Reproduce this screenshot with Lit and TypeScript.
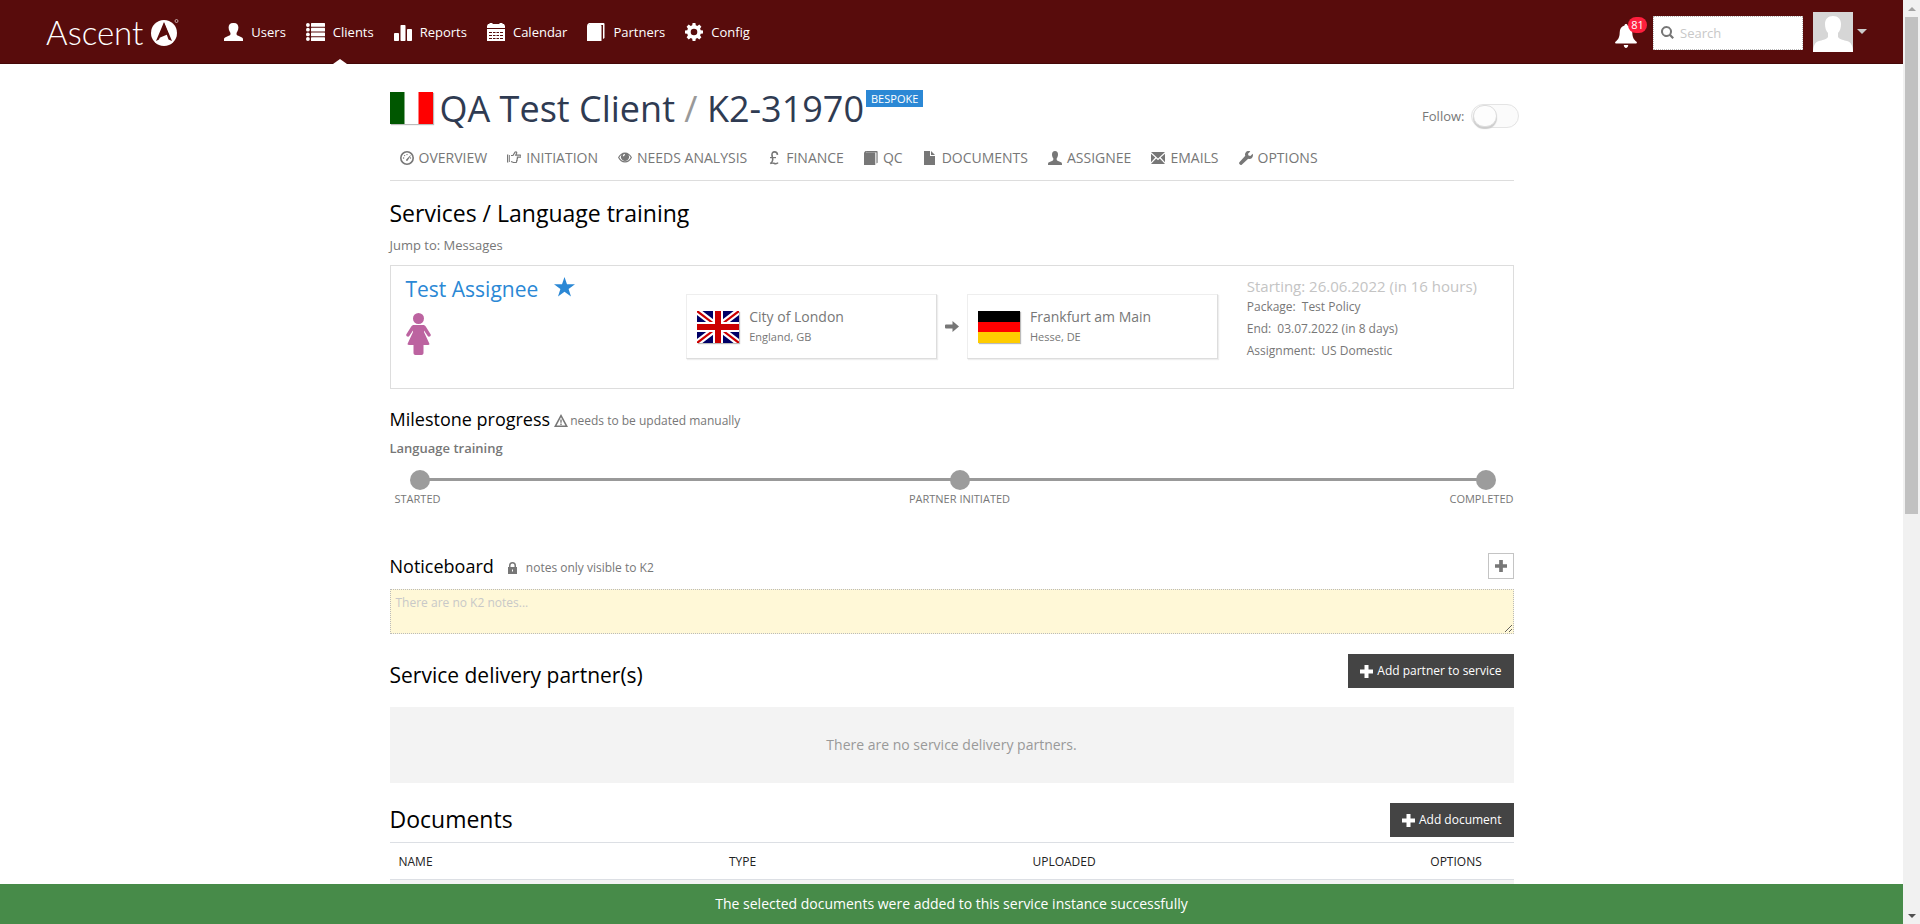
import { LitElement, html, css, svg, type TemplateResult } from "lit";
import { customElement } from "lit/decorators.js";

const icon = (w: number, h: number, box: string, body: TemplateResult) =>
  html`<svg class="icon" width=${w} height=${h} viewBox=${box} fill="currentColor" aria-hidden="true">${body}</svg>`;

const shapes = {
  user: svg`<path d="M9 0C6 0 4.600 1.800 4.600 4.600c0 1.600.4 3 1.200 4.200.5.800.700 1.200.700 2 0 1.100-.5 1.500-1.800 2L1.500 14.200C.4 14.700 0 15.200 0 16.500V18h19v-1.500c0-1.300-.4-1.800-1.500-2.300l-3.200-1.400c-1.300-.5-1.800-.9-1.800-2 0-.8.2-1.200.7-2 .8-1.200 1.200-2.600 1.200-4.200C14.400 1.800 13 0 10 0z"/>`,
  list: svg`<circle cx="1.900" cy="2" r="1.900"/><circle cx="1.900" cy="6.700" r="1.900"/><circle cx="1.900" cy="11.400" r="1.900"/><circle cx="1.900" cy="16" r="1.900"/><rect x="5" y="0" width="14" height="3.800" rx=".5"/><rect x="5" y="4.800" width="14" height="3.800" rx=".5"/><rect x="5" y="9.500" width="14" height="3.800" rx=".5"/><rect x="5" y="14.200" width="14" height="3.800" rx=".5"/>`,
  chart: svg`<rect x="0" y="10" width="5" height="8" rx=".8"/><rect x="6.500" y="2" width="5" height="16" rx=".8"/><rect x="13" y="6" width="5" height="12" rx=".8"/>`,
  calendar: svg`<path d="M0 5V3l1-2h1l1-1h2l1 1h6l1-1h2l1 1h1l1 2v2z"/><path fill-rule="evenodd" d="M0 6h18v12H0zM2 9v1h14V9zM2 12v1h14v-1zM2 15v1h14v-1z"/><path d="M5 8.500h1v8H5zM8.500 8.500h1v8h-1zM12 8.500h1v8h-1z"/>`,
  book: svg`<path d="M3 0h13.500q1 0 1 1v14l-1.500 1V2H3z"/><path d="M0 3q0-2 2-3h2L2.500 2H13.500q1 0 1 1v15H0z"/>`,
  gear: svg`<path fill-rule="evenodd" d="M7.600 0h2.800l.4 2.300 1.500.6 2-1.300 2.100 2.100-1.300 1.900.6 1.600 2.300.4v2.800l-2.300.4-.6 1.600 1.300 1.900-2.100 2.100-2-1.300-1.500.6-.4 2.300H7.600l-.4-2.300-1.500-.6-2 1.300-2.100-2.100 1.300-1.900-.6-1.600L0 10.400V7.600l2.300-.4.6-1.600-1.300-1.900 2.100-2.100 2 1.300 1.500-.6zM9 5.700a3.300 3.300 0 1 0 0 6.600 3.300 3.300 0 0 0 0-6.600z"/>`,
  bell: svg`<path d="M11 0c1 0 1.500.6 1.500 1.500 3.300.9 4.700 3.500 4.800 7 .1 5 1.600 7 4.200 9.200.8.700.2 1.800-.7 1.800H1.200C.3 19.500-.3 18.400.5 17.700 3.100 15.500 4.600 13.500 4.700 8.500c.1-3.500 1.500-6.100 4.800-7C9.500.6 10 0 11 0zM8.800 21h4.400c0 1.600-1 3-2.200 3s-2.200-1.400-2.200-3z"/>`,
  search: svg`<path fill-rule="evenodd" d="M5.500 0a5.500 5.500 0 0 1 4.600 8.500L13 11.400 11.400 13 8.500 10.100A5.500 5.500 0 1 1 5.500 0zm0 2a3.500 3.500 0 1 0 0 7 3.500 3.500 0 0 0 0-7z"/>`,
  plus: svg`<path d="M4.500 0h4v4.500H13v4H8.500V13h-4V8.500H0v-4h4.500z"/>`,
  gauge: svg`<path fill-rule="evenodd" d="M7 0a7 7 0 1 1 0 14A7 7 0 0 1 7 0zm0 1.600a5.400 5.400 0 1 0 0 10.800A5.400 5.400 0 0 0 7 1.600z"/><path d="M6 8.800l4.300-4.600.5.400-3.300 5.200a1 1 0 0 1-1.500-1z"/><circle cx="3.600" cy="7" r=".7"/><circle cx="4.600" cy="4.600" r=".7"/><circle cx="7" cy="3.600" r=".7"/><circle cx="10.500" cy="7" r=".7"/>`,
  hand: svg`<path fill="none" stroke="currentColor" stroke-width="1.200" d="M4 4.500h2L8 1.200c1-1 2 0 1.600 1L8.700 4.200h4.600c1.200 0 1.200 2 0 2H9.800M9.800 6.200c1 0 1 1.900 0 1.900M9.500 8.100c.9 0 .9 1.800 0 1.800M9 9.900c.8 0 .8 1.600 0 1.600H6.500L4 10.500"/><path d="M0 3.500h1.300v8H0zM2.200 4h.8v7h-.8z"/>`,
  eye: svg`<path fill-rule="evenodd" d="M7 1.500c3 0 5.500 2 7 5-1.500 3-4 5-7 5s-5.500-2-7-5c1.500-3 4-5 7-5zM3.600 3.800C2.600 4.500 1.800 5.400 1.300 6.500c1.200 2.200 3.200 3.800 5.700 3.800s4.500-1.600 5.700-3.800c-.5-1.100-1.300-2-2.300-2.700a4 4 0 1 1-6.800 0zM7 3a2.300 2.300 0 0 0-2.300 2.300h1.200A1.200 1.200 0 0 1 7 4.200z"/>`,
  pound: svg`<path fill="none" stroke="currentColor" stroke-width="1.600" d="M10.500 3.800C10.300 1.800 9 .9 7.600.9 5.600.9 4.700 2.300 5 4.500c.3 1.600.9 3 .7 4.500-.2 1.500-1 2.600-2.500 3.600 2-1.300 3.300-.3 4.600 0 1.400.3 2.400.1 3.200-1"/><path d="M3 6h6v1.200H3z"/>`,
  file: svg`<path d="M1 0h6v5h5v9H1zM8 0l4 4H8z"/>`,
  person: svg`<path d="M7 0C5 0 4 1.300 4 3.400c0 1.600.5 2.700 1.200 3.800.4.700.2 2-.7 2.600L1 11.300c-.8.400-1 .9-1 2.700h14c0-1.800-.2-2.300-1-2.700L9.500 9.800c-.9-.6-1.100-1.900-.7-2.600C9.500 6.100 10 5 10 3.400 10 1.300 9 0 7 0z"/>`,
  mail: svg`<path d="M0 1h14L7 7.500zM0 2.800l4.300 3.800L0 11.200zM14 2.800L9.700 6.600l4.300 4.600zM0 13l5.200-5.500L7 9.200l1.800-1.700L14 13z"/>`,
  wrench: svg`<path d="M13.700 2.800l-2.300 2.300-1.900-.5-.5-1.900L11.300.4C9.600-.2 7.700.1 6.700 1.400c-.8 1-.9 2.300-.4 3.400L.6 11a1.700 1.700 0 0 0 2.400 2.400l6.200-5.700c1.200.5 2.500.4 3.500-.5 1.200-1.100 1.600-2.900 1-4.400z"/>`,
  warn: svg`<path fill-rule="evenodd" d="M7 0l7 13H0zM7 3.300L2.600 11.500h8.800zM6.300 5.500h1.400v3.200H6.300zm0 4h1.400v1.400H6.300z"/>`,
  lock: svg`<path fill-rule="evenodd" d="M1 5V3.500a3.500 3.500 0 0 1 7 0V5h1v7H0V5zm1.500 0h4V3.500a2 2 0 0 0-4 0zM4 7.500v2h1v-2z"/>`,
  arrow: svg`<path d="M7.500 0L14 5.500 7.500 11V7.500H1a1 1 0 0 1-1-1v-2a1 1 0 0 1 1-1h6.500z"/>`,
  star: svg`<path d="M10.500 0l2.500 7.300h8l-6.400 4.600 2.400 7.600-6.500-4.700L4 19.500l2.400-7.600L0 7.300h8z"/>`,
  woman: svg`<circle cx="12.500" cy="5.500" r="5.500"/><path d="M8 12h9c1.300 0 2.200.5 2.900 1.800l4.700 7.500c.9 1.700-1.800 3.300-2.900 1.700L18 17.500V19l5.300 11.500c.3.800 0 1.500-1 1.500H17.500v8c0 1.300-.8 2-2 2h-6c-1.200 0-2-.7-2-2v-8H2.700c-1 0-1.300-.7-1-1.500L7 19v-1.500L3.300 23C2.200 24.600-.5 23 .4 21.300l4.700-7.500C5.800 12.500 6.700 12 8 12z"/>`,
};

const topNav = [
  { label: "Users", w: 19, box: "0 0 19 18", art: shapes.user },
  { label: "Clients", w: 19, box: "0 0 19 18", art: shapes.list, current: true },
  { label: "Reports", w: 18, box: "0 0 18 18", art: shapes.chart },
  { label: "Calendar", w: 18, box: "0 0 18 18", art: shapes.calendar },
  { label: "Partners", w: 18, box: "0 0 18 18", art: shapes.book },
  { label: "Config", w: 18, box: "0 0 18 18", art: shapes.gear },
];

const tabs = [
  { label: "OVERVIEW", art: shapes.gauge },
  { label: "INITIATION", art: shapes.hand },
  { label: "NEEDS ANALYSIS", art: shapes.eye },
  { label: "FINANCE", art: shapes.pound },
  { label: "QC", art: shapes.book, box: "0 0 18 18" },
  { label: "DOCUMENTS", art: shapes.file },
  { label: "ASSIGNEE", art: shapes.person },
  { label: "EMAILS", art: shapes.mail },
  { label: "OPTIONS", art: shapes.wrench },
];

const britain = svg`<rect width="42" height="32" fill="#006"/><path d="M0 0l42 32M42 0L0 32" stroke="#fff" stroke-width="6.500"/><path d="M0 0l21 16M42 0L21 16M0 32l21-16M42 32L21 16" stroke="#c00" stroke-width="2.200"/><path d="M21 0v32M0 16h42" stroke="#fff" stroke-width="10"/><path d="M21 0v32M0 16h42" stroke="#c00" stroke-width="6"/>`;
const germany = svg`<rect width="42" height="11" fill="#000"/><rect y="11" width="42" height="10" fill="#f00"/><rect y="21" width="42" height="11" fill="#fc0"/>`;

const places = [
  { city: "City of London", region: "England, GB", flag: britain },
  { city: "Frankfurt am Main", region: "Hesse, DE", flag: germany },
];

@customElement("app-root")
export class AppRoot extends LitElement {
  static styles = css`
    :host {
      display: grid;
      grid-template-columns: minmax(0, 1fr) 17px;
      height: 100vh;
      overflow: hidden;
      background: #fff;
      color: #777;
      font: 13px/20px "Open Sans", "Noto Sans", sans-serif;
    }
    * { box-sizing: border-box; }
    a { color: inherit; text-decoration: none; }
    h1, h2, h3, p, ol, ul, dl, dd { margin: 0; padding: 0; font-weight: 400; }
    ul, ol { list-style: none; }
    button, input, textarea { font: inherit; margin: 0; border-radius: 0; }
    .icon { display: block; flex: none; }
    .page { display: flex; flex-direction: column; min-height: 0; height: 100vh; }

    .topbar {
      flex: none; height: 64px; display: flex; align-items: center;
      padding: 0 36px 0 46px; background: #580c0c; border-bottom: 1px solid #450808; color: #fff;
    }
    .logo { display: flex; align-items: center; gap: 8px; margin-right: 45px; font: 300 33px/40px Lato, sans-serif; }
    .nav { display: flex; gap: 20px; height: 64px; }
    .navlink { position: relative; display: flex; align-items: center; gap: 8px; height: 64px; }
    .current::after {
      content: ""; position: absolute; left: calc(50% - 7px); bottom: 0;
      border: 7px solid transparent; border-top: 0; border-bottom: 5px solid #fff;
    }
    .tools { margin-left: auto; display: flex; align-items: center; }
    .bell { position: relative; padding: 0; border: 0; background: none; color: #fff; margin-right: 16px; padding-top: 8px; }
    .count {
      position: absolute; top: 1px; left: 13px; width: 19px; height: 16px; border-radius: 8px;
      background: #ff1f3d; font-size: 11px; line-height: 16px; text-align: center;
    }
    .search {
      display: flex; align-items: center; gap: 6px; width: 150px; height: 34px; padding: 0 7px;
      background: #fff; border: 1px dotted #bbb; color: #777; margin: 2px 10px 0 0;
    }
    .search input { flex: 1; min-width: 0; border: 0; padding: 0; outline: 0; background: none; }
    ::placeholder { color: #c8c8c8; opacity: 1; }
    .account { display: flex; align-items: center; gap: 4px; padding: 0; border: 0; background: none; color: #ccc; }

    .body { flex: 1; min-height: 0; overflow: hidden; }
    .wrap { max-width: 1124px; margin: 0 auto; padding-top: 20px; }
    .row { display: flex; justify-content: space-between; }
    .title { display: flex; align-items: center; height: 48px; font-size: 36px; line-height: 48px; color: #2f3b52; }
    .name { padding-top: 2px; }
    .flag { display: block; flex: none; box-shadow: 1px 1px 1px #bbb; }
    .title .flag { margin-right: 7px; }
    .slash { color: #999; }
    .badge {
      align-self: flex-start; margin: 6px 0 0 2px; padding: 0 5px; background: #2b88d5; color: #fff;
      font-size: 11px; line-height: 17px;
    }
    .follow { display: flex; align-items: center; gap: 6px; margin: 16px -5px 0 0; }
    .switch {
      appearance: none; width: 48px; height: 24px; margin: 0; border: 1px solid #e4e4e4;
      border-radius: 12px; background: #fbfbfb; display: flex; align-items: center; padding: 0 1px;
    }
    .switch::before {
      content: ""; width: 22px; height: 20px; border-radius: 11px; border: 1px solid #ddd;
      background: #fdfdfd; box-shadow: 0 2px 1px #ccc;
    }
    .tabs { display: flex; gap: 20px; margin-top: 16px; padding: 0 10px 12px; border-bottom: 1px solid #ddd; font-size: 14px; }
    .tab { display: flex; align-items: center; gap: 5px; white-space: nowrap; }

    .h23 { font-size: 23px; line-height: 32px; color: #000; }
    .h21 { font-size: 21px; line-height: 26px; color: #000; }
    .h18 { font-size: 18px; line-height: 26px; color: #000; }
    .service { margin-top: 16px; }
    .jump { margin-top: 6px; }
    .card {
      display: grid; grid-template-columns: 281fr 532fr 280fr; height: 124px; margin-top: 10px;
      padding: 9px 15px; border: 1px solid #ddd;
    }
    .who { display: flex; gap: 16px; font-size: 21px; line-height: 28px; color: #2b88d5; }
    .who .icon { margin-top: 2px; }
    .woman { color: #bc63a0; padding-top: 10px; }
    .route { display: grid; grid-template-columns: 1fr 30px 1fr; align-self: start; margin-top: 19px; align-items: center; }
    .route > .icon { justify-self: center; }
    .place {
      display: flex; align-items: center; gap: 10px; height: 65px; padding: 1px 10px 0;
      border: 1px solid #eee; border-right-color: #ddd; border-bottom-color: #ddd; box-shadow: 1px 1px 1px #eee;
    }
    .city { font-size: 14px; }
    .region { font-size: 11px; }
    .dates { padding: 1px 0 0 29px; font-size: 12px; line-height: 22px; }
    .starting { font-size: 15px; line-height: 20px; color: #c4c4c4; }
    .dates div { display: flex; gap: 6px; }

    .mhead { display: flex; align-items: center; margin-top: 17px; font-size: 12px; }
    .mhead .icon { margin: 3px 2px 0 4px; }
    .note { font-size: 12px; padding-top: 4px; }
    .sub { margin-top: 6px; font-weight: 600; }
    .steps {
      position: relative; display: grid; grid-template-columns: 80px 1fr 64px; margin-top: 12px;
      font-size: 11px; line-height: 16px; white-space: nowrap;
    }
    .steps::before { content: ""; position: absolute; left: 30px; right: 28px; top: 8px; height: 3px; background: #999; }
    .step { position: relative; display: flex; flex-direction: column; align-items: center; gap: 1px; }
    .step:first-child { align-items: flex-start; padding-left: 5px; }
    .step:last-child { align-items: flex-end; }
    .dot { width: 20px; height: 20px; border-radius: 50%; background: #9c9c9c; }
    .step:first-child .dot { margin-left: 15px; }
    .step:last-child .dot { margin-right: 18px; }

    .board { display: flex; align-items: center; margin-top: 46px; }
    .board .icon { margin: 3px 9px 0 14px; }
    .board .square .icon { margin: 0; }
    .square {
      margin-left: auto; width: 26px; height: 26px; display: grid; place-content: center;
      padding: 0; border: 1px solid #c4c4c4; background: #fff; color: #777;
    }
    .notes {
      display: block; width: 100%; height: 45px; margin-top: 10px; padding: 3px 5px; resize: vertical;
      border: 1px dotted #bbb; background: #fff8d7; font-size: 12px; outline: 0;
    }
    .partners { margin-top: 20px; align-items: flex-end; }
    .docs { margin-top: 20px; height: 34px; }
    .dark {
      display: flex; align-items: center; gap: 4px; height: 34px; padding: 0 12px;
      border: 0; background: #444; color: #fff; font-size: 12px;
    }
    .empty { margin-top: 19px; padding: 28px; background: #f3f3f3; color: #999; font-size: 14px; text-align: center; }
    .table { width: 100%; margin-top: 5px; border-collapse: separate; border-spacing: 0; table-layout: fixed; font-size: 12px; color: #222; }
    .table th { padding: 9px 9px 7px; font-weight: 400; text-align: left; border: solid #dcdfe4; border-width: 1px 0; }
    .table td { height: 36px; background: #f3f3f3; }
    .c1 { width: 29.4%; } .c2 { width: 27%; } .c3 { width: 35.4%; }
    .toast { flex: none; height: 40px; padding: 10px; background: #478b49; color: #fff; font-size: 14px; text-align: center; }

    .bar { display: grid; grid-template-rows: 17px 497fr 393fr 17px; background: #f1f1f1; justify-items: center; }
    .bar .icon { align-self: center; }
    .thumb { width: 13px; background: #c1c1c1; }
  `;

  render() {
    return html`
      <div class="page">
        <header class="topbar">
          <a class="logo" href="#"><span>Ascent</span>
            <svg class="icon" width="28" height="28" viewBox="0 0 28 28"><circle cx="13" cy="15" r="13" fill="#fff"/><path fill="#580c0c" d="M13 4l8 19-3.500-1.500L13 9 8 21.500 5 23z"/><path fill="#580c0c" d="M13 5l4.500 11L8 20z"/><circle cx="25.500" cy="3" r="1.500" fill="none" stroke="#fff" stroke-width=".6"/></svg>
          </a>
          <nav class="nav">
            ${topNav.map((n) => html`<a class="navlink ${n.current ? "current" : ""}" href="#">${icon(n.w, 18, n.box, n.art)}<span>${n.label}</span></a>`)}
          </nav>
          <div class="tools">
            <button class="bell" aria-label="Notifications">${icon(22, 24, "0 0 22 24", shapes.bell)}<span class="count">81</span></button>
            <label class="search">${icon(13, 13, "0 0 13 13", shapes.search)}<input type="search" placeholder="Search" aria-label="Search"></label>
            <button class="account" aria-label="Account">
              <svg class="icon" width="40" height="40" viewBox="0 0 40 40"><path fill="#d6d6d6" d="M0 0h40v40H0z"/><path fill="#fff" d="M20 4c-5 0-8 3-8 8 0 4 1 7 3 9v4c-2 3-6 3-9 4-4 1-6 5-6 11h40c0-6-2-10-6-11-3-1-7-1-9-4v-4c2-2 3-5 3-9 0-5-3-8-8-8z"/></svg>
              ${icon(10, 5, "0 0 10 5", svg`<path d="M0 0h10L5 5z"/>`)}
            </button>
          </div>
        </header>

        <main class="body">
          <div class="wrap">
            <div class="row">
              <h1 class="title">
                <svg class="flag" width="43" height="32" viewBox="0 0 43 32"><path fill="#fff" d="M0 0h43v32H0z"/><path fill="#005700" d="M0 0h14.500v32H0z"/><path fill="#f00" d="M28.500 0H43v32H28.500z"/></svg>
                <span class="name">QA Test Client <span class="slash">/</span> K2-31970</span><span class="badge">BESPOKE</span>
              </h1>
              <label class="follow">Follow:<input class="switch" type="checkbox" role="switch"></label>
            </div>
            <nav class="tabs">
              ${tabs.map((t) => html`<a class="tab" href="#">${icon(14, 14, t.box ?? "0 0 14 14", t.art)}${t.label}</a>`)}
            </nav>

            <h2 class="h23 service">Services / Language training</h2>
            <p class="jump">Jump to: <a href="#">Messages</a></p>

            <section class="card">
              <div>
                <a class="who" href="#">Test Assignee ${icon(21, 20, "0 0 21 20", shapes.star)}</a>
                <div class="woman">${icon(25, 42, "0 0 25 42", shapes.woman)}</div>
              </div>
              <div class="route">
                ${places.map((p, i) => html`
                  ${i ? icon(14, 11, "0 0 14 11", shapes.arrow) : ""}
                  <div class="place">
                    <svg class="flag" width="42" height="32" viewBox="0 0 42 32">${p.flag}</svg>
                    <div><div class="city">${p.city}</div><div class="region">${p.region}</div></div>
                  </div>`)}
              </div>
              <div class="dates">
                <p class="starting">Starting: 26.06.2022 (in 16 hours)</p>
                <div><span>Package:</span><span>Test Policy</span></div>
                <div><span>End:</span><span>03.07.2022 (in 8 days)</span></div>
                <div><span>Assignment:</span><span>US Domestic</span></div>
              </div>
            </section>

            <div class="mhead"><h3 class="h18">Milestone progress</h3>${icon(14, 13, "0 0 14 13", shapes.warn)}<span class="note">needs to be updated manually</span></div>
            <p class="sub">Language training</p>
            <ol class="steps">
              ${["STARTED", "PARTNER INITIATED", "COMPLETED"].map((s) => html`<li class="step"><span class="dot"></span>${s}</li>`)}
            </ol>

            <div class="board">
              <h3 class="h18">Noticeboard</h3>${icon(9, 12, "0 0 9 12", shapes.lock)}<span class="note">notes only visible to K2</span>
              <button class="square" aria-label="Add note">${icon(12, 12, "0 0 13 13", shapes.plus)}</button>
            </div>
            <textarea class="notes" aria-label="Noticeboard" placeholder="There are no K2 notes..."></textarea>

            <div class="row partners">
              <h3 class="h21">Service delivery partner(s)</h3>
              <button class="dark">${icon(13, 13, "0 0 13 13", shapes.plus)}Add partner to service</button>
            </div>
            <p class="empty">There are no service delivery partners.</p>

            <div class="row docs">
              <h2 class="h23">Documents</h2>
              <button class="dark">${icon(13, 13, "0 0 13 13", shapes.plus)}Add document</button>
            </div>
            <table class="table">
              <thead><tr><th class="c1">NAME</th><th class="c2">TYPE</th><th class="c3">UPLOADED</th><th>OPTIONS</th></tr></thead>
              <tbody><tr><td colspan="4"></td></tr></tbody>
            </table>
          </div>
        </main>
        <div class="toast" role="status">The selected documents were added to this service instance successfully</div>
      </div>
      <div class="bar" aria-hidden="true">
        ${icon(8, 4, "0 0 8 4", svg`<path fill="#a3a3a3" d="M0 4l4-4 4 4z"/>`)}
        <div class="thumb"></div><div></div>
        ${icon(8, 4, "0 0 8 4", svg`<path fill="#505050" d="M0 0h8L4 4z"/>`)}
      </div>
    `;
  }
}
